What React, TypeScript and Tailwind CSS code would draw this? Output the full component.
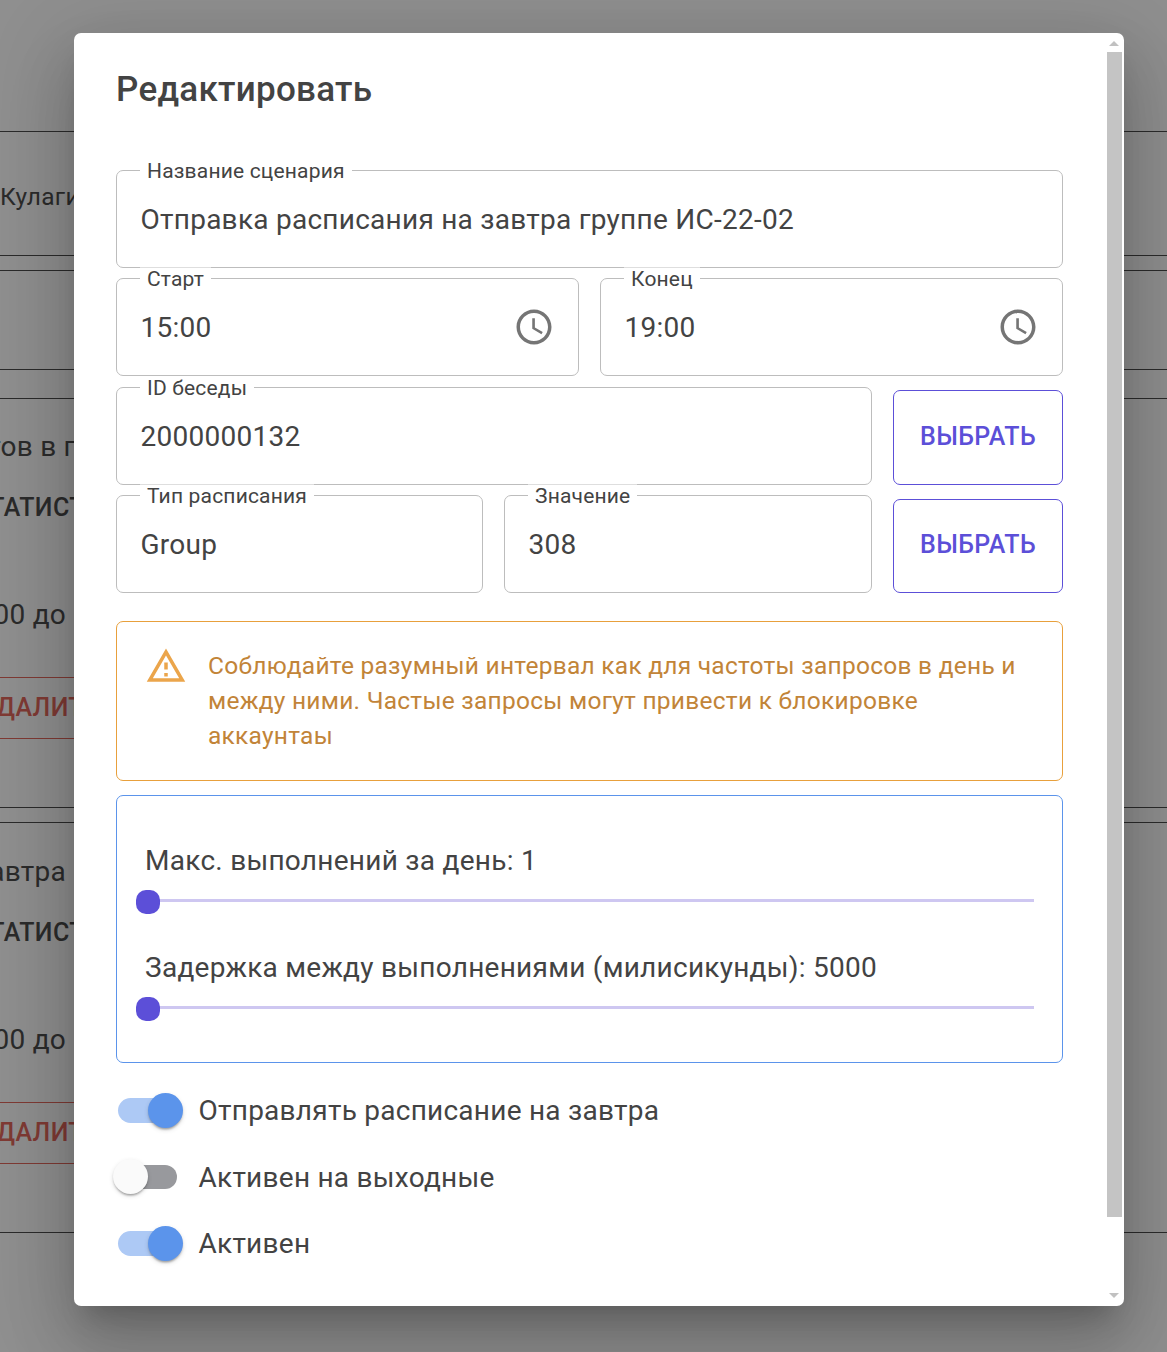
import React from "react";

type FieldProps = {
  label: string;
  value: string;
  className?: string;
  icon?: React.ReactNode;
  overlap?: boolean;
};

function Clock() {
  return (
    <svg viewBox="0 0 24 24" className="-mt-[2px] mr-[23px] size-[42px] shrink-0 fill-[#757575]">
      <path d="M11.99 2C6.47 2 2 6.48 2 12s4.47 10 9.99 10C17.52 22 22 17.52 22 12S17.52 2 11.99 2zM12 20c-4.42 0-8-3.58-8-8s3.58-8 8-8 8 3.58 8 8-3.58 8-8 8z" />
      <path d="M12.5 7H11v6l5.25 3.15.75-1.23-4.5-2.67z" />
    </svg>
  );
}

function Field({ label, value, className = "", icon, overlap = false }: FieldProps) {
  return (
    <div
      className={`relative flex h-[98px] items-center justify-between rounded-[7px] border border-[#bdbdbd] pl-[23.5px] pt-[2px] ${className}`}
    >
      <span
        className={`absolute -top-[12px] left-[23px] h-[22px] border-t bg-white bg-clip-padding px-[7px] text-[21px] leading-[22px] tracking-[0.18px] ${
          overlap ? "border-white/50" : "border-transparent"
        }`}
      >
        {label}
      </span>
      <span className="text-[28px] leading-[40px] tracking-[0.256px]">{value}</span>
      {icon}
    </div>
  );
}

function PickButton({ className }: { className: string }) {
  return (
    <button
      className={`flex w-[170px] items-center justify-center rounded-[7px] border border-[#5c4fd8] text-[25px] font-medium leading-[42px] tracking-[0.38px] text-[#5c4fd8] ${className}`}
    >
      ВЫБРАТЬ
    </button>
  );
}

function Slider({ label }: { label: string }) {
  return (
    <div className="h-[107px]">
      <div className="leading-[42px]">{label}</div>
      <div className="relative ml-[3px] mt-[17px] h-[3px] bg-[#cec7f1]">
        <span className="absolute -left-3 -top-[9px] size-6 rounded-[10px] bg-[#5c4fd8]" />
      </div>
    </div>
  );
}

function Switch({ label, on }: { label: string; on: boolean }) {
  return (
    <div className="flex h-[66.5px] items-center">
      <span
        className={`relative ml-[2px] mr-[22px] h-[24.5px] w-[59px] rounded-full ${on ? "bg-[#adc9f5]" : "bg-[#98999d]"}`}
      >
        <span
          className={`absolute -top-[5.25px] size-[35px] rounded-full shadow-[0_3px_2px_-2px_rgba(0,0,0,0.2),0_2px_2px_rgba(0,0,0,0.14),0_2px_5px_rgba(0,0,0,0.12)] ${
            on ? "left-[30px] bg-[#5b94eb]" : "-left-[5px] bg-[#fafafa]"
          }`}
        />
      </span>
      <span className="-ml-[0.5px] pt-[2px]">{label}</span>
    </div>
  );
}

type ScheduleCardProps = { title: string; titleClass: string; className: string };

function ScheduleCard({ title, titleClass, className }: ScheduleCardProps) {
  return (
    <div className={`overflow-hidden whitespace-nowrap border-y border-[#2b2b2b] ${className}`}>
      <div className={`flex h-[42px] items-center justify-end ${titleClass}`}>{title}</div>
      <div className="mt-[19px] flex h-[42px] items-center text-[25px] font-medium tracking-[0.38px]">
        <span className="-ml-[27px]">СТАТИСТИКА</span>
      </div>
      <div className="mt-[65px] flex h-[42px] w-[66px] items-center justify-end">с 15:00 до</div>
      <div className="mt-[41px] flex h-[62px] w-[120px] items-center border-y border-[#7f3a34] text-[25px] font-medium tracking-[0.38px] text-[#7f3a34]">
        <span className="-ml-[19px]">УДАЛИТЬ</span>
      </div>
    </div>
  );
}

export default function App() {
  return (
    <div className="relative h-[1352px] w-[1167px] overflow-hidden bg-[#8f8f8f] font-[Roboto,sans-serif] text-[28px] tracking-[0.25px] text-[#2b2b2b]">
      <div className="pt-[131px]">
        <div className="flex h-[125px] items-center border-y border-[#2b2b2b] pt-[8px] text-[24.5px]">Кулагин</div>
        <div className="mt-[14px] h-[100px] border-y border-[#2b2b2b]" />
        <div className="mt-[28px]" />
        <ScheduleCard title="Список ответов в п" titleClass="w-[80px]" className="h-[410px] pt-[27px]" />
        <div className="mt-[14px]" />
        <ScheduleCard title="Расписание на завтра" titleClass="w-[66px]" className="h-[411px] pt-[28px]" />
      </div>

      <div className="absolute left-[74px] top-[33px] flex h-[1273px] w-[1050px] overflow-hidden rounded-[7px] bg-white text-[#434343] shadow-[0_19px_26px_-12px_rgba(0,0,0,0.2),0_42px_66px_5px_rgba(0,0,0,0.14),0_16px_80px_14px_rgba(0,0,0,0.12)]">
        <main className="w-[1031px] px-[42px] pt-[29px]">
          <h2 className="text-[35px] font-medium leading-[56px] tracking-[0.27px]">Редактировать</h2>

          <Field className="mt-[52px]" label="Название сценария" value="Отправка расписания на завтра группе ИС-22-02" />
          <div className="mt-[10px] grid grid-cols-2 gap-[21px]">
            <Field overlap label="Старт" value="15:00" icon={<Clock />} />
            <Field overlap label="Конец" value="19:00" icon={<Clock />} />
          </div>
          <div className="mt-[11px] flex items-end justify-between">
            <Field className="w-[756px]" label="ID беседы" value="2000000132" />
            <PickButton className="h-[95px] pb-px" />
          </div>
          <div className="mt-[10px] flex items-end justify-between">
            <Field overlap className="w-[367px]" label="Тип расписания" value="Group" />
            <Field overlap className="w-[368px]" label="Значение" value="308" />
            <PickButton className="h-[94px] pb-[2px]" />
          </div>

          <div className="mt-7 flex h-[160px] rounded-[7px] border border-[#e8a03c] pl-7 pt-[23px]">
            <svg viewBox="0 0 24 24" className="size-[42px] shrink-0 fill-[#eba54b]">
              <path d="M12 5.99L19.53 19H4.47L12 5.99M12 2L1 21h22L12 2zm1 14h-2v2h2v-2zm0-6h-2v4h2v-4z" />
            </svg>
            <p className="ml-[21px] mt-[3px] w-[830px] text-[24.5px] leading-[35px] tracking-[0.263px] text-[#c28438]">
              Соблюдайте разумный интервал как для частоты запросов в день и между ними. Частые запросы могут привести к
              блокировке аккаунтаы
            </p>
          </div>

          <div className="mt-[14px] h-[268px] rounded-[7px] border border-[#5b94eb] px-7 pt-[44px] tracking-[0.263px]">
            <Slider label="Макс. выполнений за день: 1" />
            <Slider label="Задержка между выполнениями (милисикунды): 5000" />
          </div>

          <div className="mt-[14px]">
            <Switch on label="Отправлять расписание на завтра" />
            <Switch on={false} label="Активен на выходные" />
            <Switch on label="Активен" />
          </div>
        </main>
        <aside className="flex w-[19px] flex-col items-center px-px">
          <span className="-ml-px mt-2 h-0 w-0 border-x-[5px] border-b-[5px] border-x-transparent border-b-[#c1c1c1]" />
          <span className="mt-[6px] h-[1165px] w-[15px] bg-[#c4c4c4]" />
          <span className="-ml-px mt-[76px] h-0 w-0 border-x-[5px] border-t-[5px] border-x-transparent border-t-[#c1c1c1]" />
        </aside>
      </div>
    </div>
  );
}
